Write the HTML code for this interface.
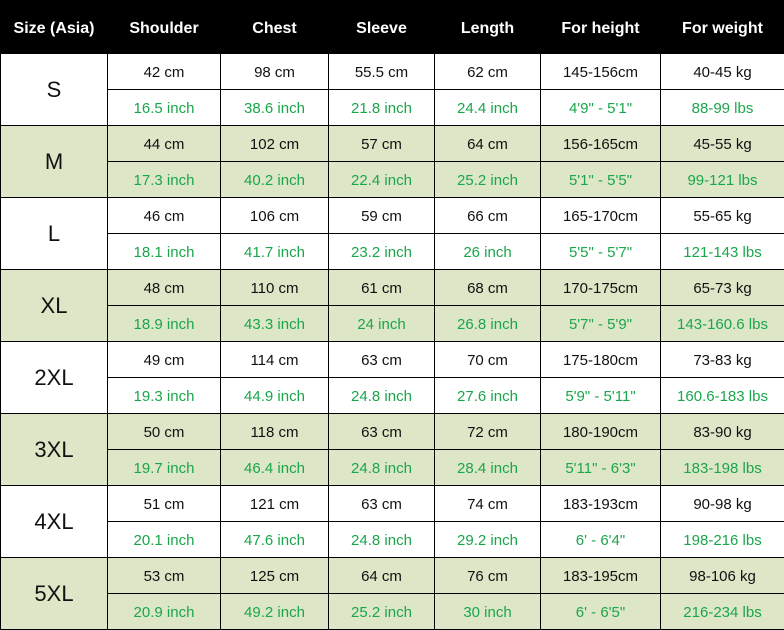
<!DOCTYPE html>
<html><head><meta charset="utf-8"><style>
html,body{margin:0;padding:0;background:#fff;}
table{border-collapse:collapse;table-layout:fixed;width:784px;font-family:"Liberation Sans",Arial,sans-serif;}
td,th{border:1px solid #000;text-align:center;padding:0;font-size:15px;color:#111;}
th{background:#000;color:#fff;font-weight:bold;font-size:16px;height:49px;padding-top:3px;border-color:#000;}
td{height:34px;padding-top:1px;}
td.sz{font-size:22px;}
tr.g td{background:#dde7c7;}
.i td:not(.sz){color:#1aa64b;}
</style></head><body>
<table>
<colgroup><col style="width:107px"><col style="width:113px"><col style="width:108px"><col style="width:106px"><col style="width:106px"><col style="width:120px"><col style="width:124px"></colgroup>
<tr><th>Size (Asia)</th><th>Shoulder</th><th>Chest</th><th>Sleeve</th><th>Length</th><th>For height</th><th>For weight</th></tr>
<tr><td class="sz" rowspan="2">S</td><td>42 cm</td><td>98 cm</td><td>55.5 cm</td><td>62 cm</td><td>145-156cm</td><td>40-45 kg</td></tr>
<tr class="i"><td>16.5 inch</td><td>38.6 inch</td><td>21.8 inch</td><td>24.4 inch</td><td>4'9" - 5'1"</td><td>88-99 lbs</td></tr>
<tr class="g"><td class="sz" rowspan="2">M</td><td>44 cm</td><td>102 cm</td><td>57 cm</td><td>64 cm</td><td>156-165cm</td><td>45-55 kg</td></tr>
<tr class="g i"><td>17.3 inch</td><td>40.2 inch</td><td>22.4 inch</td><td>25.2 inch</td><td>5'1" - 5'5"</td><td>99-121 lbs</td></tr>
<tr><td class="sz" rowspan="2">L</td><td>46 cm</td><td>106 cm</td><td>59 cm</td><td>66 cm</td><td>165-170cm</td><td>55-65 kg</td></tr>
<tr class="i"><td>18.1 inch</td><td>41.7 inch</td><td>23.2 inch</td><td>26 inch</td><td>5'5" - 5'7"</td><td>121-143 lbs</td></tr>
<tr class="g"><td class="sz" rowspan="2">XL</td><td>48 cm</td><td>110 cm</td><td>61 cm</td><td>68 cm</td><td>170-175cm</td><td>65-73 kg</td></tr>
<tr class="g i"><td>18.9 inch</td><td>43.3 inch</td><td>24 inch</td><td>26.8 inch</td><td>5'7" - 5'9"</td><td>143-160.6 lbs</td></tr>
<tr><td class="sz" rowspan="2">2XL</td><td>49 cm</td><td>114 cm</td><td>63 cm</td><td>70 cm</td><td>175-180cm</td><td>73-83 kg</td></tr>
<tr class="i"><td>19.3 inch</td><td>44.9 inch</td><td>24.8 inch</td><td>27.6 inch</td><td>5'9" - 5'11"</td><td>160.6-183 lbs</td></tr>
<tr class="g"><td class="sz" rowspan="2">3XL</td><td>50 cm</td><td>118 cm</td><td>63 cm</td><td>72 cm</td><td>180-190cm</td><td>83-90 kg</td></tr>
<tr class="g i"><td>19.7 inch</td><td>46.4 inch</td><td>24.8 inch</td><td>28.4 inch</td><td>5'11" - 6'3"</td><td>183-198 lbs</td></tr>
<tr><td class="sz" rowspan="2">4XL</td><td>51 cm</td><td>121 cm</td><td>63 cm</td><td>74 cm</td><td>183-193cm</td><td>90-98 kg</td></tr>
<tr class="i"><td>20.1 inch</td><td>47.6 inch</td><td>24.8 inch</td><td>29.2 inch</td><td>6' - 6'4"</td><td>198-216 lbs</td></tr>
<tr class="g"><td class="sz" rowspan="2">5XL</td><td>53 cm</td><td>125 cm</td><td>64 cm</td><td>76 cm</td><td>183-195cm</td><td>98-106 kg</td></tr>
<tr class="g i"><td>20.9 inch</td><td>49.2 inch</td><td>25.2 inch</td><td>30 inch</td><td>6' - 6'5"</td><td>216-234 lbs</td></tr>
</table>
</body></html>
